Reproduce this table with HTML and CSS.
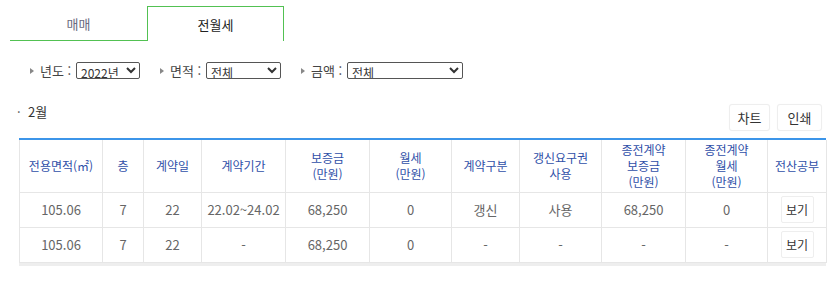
FILE: index.html
```html
<!DOCTYPE html>
<html lang="ko">
<head>
<meta charset="utf-8">
<link rel="stylesheet" href="styles.css">
</head>
<body>
<div class="tabs">
  <div class="tab">매매</div>
  <div class="tab active">전월세</div>
</div>
<div class="filters">
  <div class="filter">
    <span class="tri"></span><span class="lbl">년도 :</span>
    <select class="sel sel-year"><option>2022년</option></select>
  </div>
  <div class="filter">
    <span class="tri"></span><span class="lbl">면적 :</span>
    <select class="sel sel-area"><option>전체</option></select>
  </div>
  <div class="filter">
    <span class="tri"></span><span class="lbl">금액 :</span>
    <select class="sel sel-price"><option>전체</option></select>
  </div>
</div>
<div class="head">
  <div class="month"><span class="dot">·</span>2월</div>
  <div class="btns">
    <button class="btn btn-chart">차트</button>
    <button class="btn btn-print">인쇄</button>
  </div>
</div>
<div class="tablewrap">
<table class="grid">
  <colgroup>
    <col class="c1"><col class="c2"><col class="c3"><col class="c4"><col class="c5"><col class="c6"><col class="c7"><col class="c8"><col class="c9"><col class="c10"><col class="c11">
  </colgroup>
  <thead>
    <tr>
      <th>전용면적(㎡)</th><th>층</th><th>계약일</th><th>계약기간</th><th>보증금<br>(만원)</th><th>월세<br>(만원)</th><th>계약구분</th><th>갱신요구권<br>사용</th><th>종전계약<br>보증금<br>(만원)</th><th>종전계약<br>월세<br>(만원)</th><th>전산공부</th>
    </tr>
  </thead>
  <tbody>
    <tr>
      <td>105.06</td><td>7</td><td>22</td><td>22.02~24.02</td><td>68,250</td><td>0</td><td>갱신</td><td>사용</td><td>68,250</td><td>0</td><td><button class="view">보기</button></td>
    </tr>
    <tr>
      <td>105.06</td><td>7</td><td>22</td><td>-</td><td>68,250</td><td>0</td><td>-</td><td>-</td><td>-</td><td>-</td><td><button class="view">보기</button></td>
    </tr>
  </tbody>
</table>
</div>
</body>
</html>
```
FILE: styles.css
```css
* { box-sizing: border-box; }
body {
  margin: 0;
  font-family: "Noto Sans CJK KR", "Noto Sans", sans-serif;
  color: #333;
  background: #fff;
}
.tabs {
  display: flex;
  padding: 6px 0 0 10px;
}
.tab {
  width: 137px;
  height: 35px;
  display: flex;
  align-items: center;
  justify-content: center;
  font-size: 13px;
  color: #6a6a80;
  border-bottom: 1px solid #52c152;
}
.tab.active {
  color: #222;
  border: 1px solid #52c152;
  border-bottom: none;
}
.filters {
  display: flex;
  align-items: center;
  padding: 21px 0 0 30px;
  height: 38px;
}
.filter {
  display: flex;
  align-items: center;
  margin-right: 20px;
}
.tri {
  width: 0;
  height: 0;
  border-top: 3.5px solid transparent;
  border-bottom: 3.5px solid transparent;
  border-left: 4px solid #888;
  margin-right: 6px;
}
.lbl {
  width: 33px;
  font-size: 13px;
  color: #444;
  margin-right: 3px;
  line-height: 16px;
  white-space: nowrap;
}
.sel {
  height: 17px;
  font-family: "Noto Sans CJK KR", sans-serif;
  font-size: 12px;
  color: #333;
  border: 1px solid #555;
  border-radius: 2px;
  background: #fff;
  padding: 0;
  line-height: 15px;
}
.sel-year { width: 64px; }
.sel-area { width: 75px; }
.sel-price { width: 116px; }
.head {
  display: flex;
  justify-content: space-between;
  align-items: flex-start;
  padding: 25px 11px 0 17px;
}
.month {
  font-size: 13px;
  color: #333;
  line-height: 16px;
}
.dot {
  display: inline-block;
  width: 11px;
  color: #555;
}
.btns {
  display: flex;
  gap: 7px;
}
.btn {
  height: 27px;
  font-family: "Noto Sans CJK KR", sans-serif;
  font-size: 13px;
  color: #333;
  background: #fff;
  border: 1px solid #eee;
  border-radius: 3px;
  box-shadow: 0 0 1px rgba(0,0,0,0.05);
  padding: 0;
}
.btn-chart { width: 41px; }
.btn-print { width: 45px; }
.tablewrap {
  margin: 7px 7px 0 19px;
  border-top: 2px solid #3c95e9;
  border-bottom: 3px solid #eee;
}
.grid {
  width: 100%;
  border-collapse: collapse;
  table-layout: fixed;
}
.c1 { width: 83px; }
.c2 { width: 41px; }
.c3 { width: 58px; }
.c4 { width: 84px; }
.c5 { width: 84px; }
.c6 { width: 82px; }
.c7 { width: 68px; }
.c8 { width: 82px; }
.c9 { width: 84px; }
.c10 { width: 82px; }
.c11 { width: 59px; }
.grid th, .grid td {
  border: 1px solid #e6e6e6;
  text-align: center;
  padding: 0;
}
.grid th {
  height: 52px;
  font-size: 12px;
  font-weight: normal;
  color: #2f4fa8;
  line-height: 16px;
  border-top: none;
}
.grid td {
  height: 35px;
  font-size: 13px;
  color: #666;
}
.view {
  width: 33px;
  height: 27px;
  font-family: "Noto Sans CJK KR", sans-serif;
  font-size: 12px;
  color: #333;
  background: #fff;
  border: 1px solid #eee;
  border-radius: 2px;
  padding: 0;
}
```
